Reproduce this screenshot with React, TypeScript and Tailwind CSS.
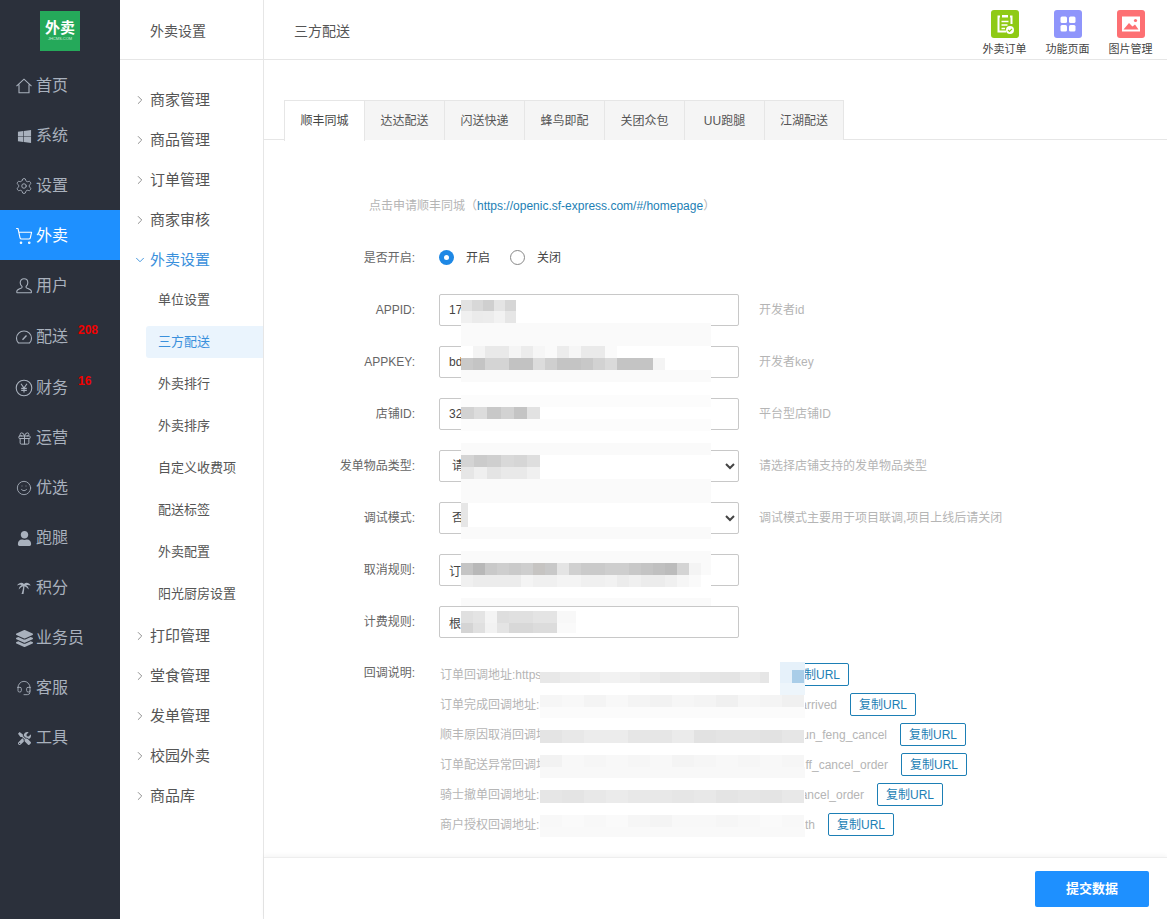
import { Settings, ShoppingCart, Gift, Smile, Headset, ChevronRight, ChevronDown } from "lucide-react";
import { FaWindows, FaUser, FaLayerGroup, FaTools } from "react-icons/fa";

const HomeIcon = () => (
  <svg width="18" height="18" viewBox="0 0 18 18" fill="none" stroke="currentColor" strokeWidth="1.1">
    <path d="M1.500 9.200 9 2.200l7.500 7M4 7.500v8.300h10V7.500" />
  </svg>
);

const UserIcon = () => (
  <svg width="18" height="18" viewBox="0 0 18 18" fill="none" stroke="currentColor" strokeWidth="1.1">
    <path d="M9 1.800c2.300 0 3.800 1.700 3.800 3.900 0 1.500-.7 2.900-1.700 3.700v1c0 .8 3.700 1.500 4.900 3 .5.600.5 2.400.3 2.400H2c-.3 0-.3-1.800.2-2.400 1.200-1.500 4.800-2.200 4.800-3v-1c-1.100-.8-1.800-2.200-1.800-3.700 0-2.200 1.500-3.900 3.800-3.900Z" />
  </svg>
);

const GaugeIcon = () => (
  <svg width="18" height="18" viewBox="0 0 18 18" fill="none" stroke="currentColor" strokeWidth="1.1">
    <path d="M3.500 15h11c1.300-1.300 2-3 2-4.800C16.500 6 13.200 3 9 3S1.500 6 1.500 10.200c0 1.800.7 3.500 2 4.800Z" />
    <path d="m7.500 11.800 4-4.300" strokeWidth="1.400" />
  </svg>
);

const YenIcon = () => (
  <svg width="18" height="18" viewBox="0 0 18 18" fill="none" stroke="currentColor" strokeWidth="1.1">
    <circle cx="9" cy="9" r="7.800" />
    <path d="M6 4.800 9 9l3-4.200M9 9v4.600M6.200 9.400h5.600M6.200 11.400h5.600" />
  </svg>
);

const PalmIcon = () => (
  <svg width="18" height="18" viewBox="0 0 18 18" fill="currentColor">
    <path d="M9 5C7 3 4 3.500 2 6.500c2-.8 3.500-.8 4.500-.3C4.800 7 3.800 8.500 3.800 10.500 5 9 6.500 7.800 8.200 7.200 8 9.500 7.500 12 6.500 15h2C9 12.500 9.300 9.800 9.500 7.300c1.500.6 3 1.800 4.200 3.200 0-2-1-3.500-2.600-4.300 1.200-.4 2.800-.3 4.600.4C14 3.500 11 3 9 5Z" />
  </svg>
);

const OrderIcon = () => (
  <svg width="20" height="22" viewBox="0 0 20 22" fill="none">
    <path d="M7 2h6v2.500H7z" fill="#fff" />
    <path d="M5 3.500H3.500v15H11" stroke="#fff" strokeWidth="2" />
    <path d="M15 3.500h1.500V11" stroke="#fff" strokeWidth="2" />
    <path d="M6.500 8.500h7M6.500 12h6M6.500 15.500h3.500" stroke="#fff" strokeWidth="1.600" />
    <circle cx="15" cy="17" r="4" fill="#fff" />
    <path d="m13 17 1.500 1.500 2.500-2.700" stroke="#8fca15" strokeWidth="1.200" />
  </svg>
);

const GridIcon = () => (
  <svg width="16" height="16" viewBox="0 0 16 16" fill="#fff">
    <rect x="0.500" y="0.500" width="6.500" height="6.500" rx="1.500" />
    <rect x="9" y="0.500" width="6.500" height="6.500" rx="1.500" />
    <rect x="0.500" y="9" width="6.500" height="6.500" rx="1.500" />
    <rect x="9" y="9" width="6.500" height="6.500" rx="1.500" />
  </svg>
);

const PictureIcon = () => (
  <svg width="20" height="18" viewBox="0 0 20 18">
    <rect x="1" y="1.500" width="18" height="15" fill="#fff" />
    <path d="M2.500 14.500 8 8l3.500 3.500 2.500-2 3.500 5z" fill="#fd7073" />
    <circle cx="14.500" cy="5.500" r="1.600" fill="#fd7073" />
  </svg>
);

const sideNav = [
  { label: "首页", h: "h-[50px]", icon: <HomeIcon /> },
  { label: "系统", h: "h-[50px]", icon: <FaWindows size={15} className="mx-px" /> },
  { label: "设置", h: "h-[50px]", icon: <Settings size={18} strokeWidth={1.2} /> },
  { label: "外卖", h: "h-[50px]", icon: <ShoppingCart size={18} strokeWidth={1.5} />, active: true },
  { label: "用户", h: "h-[50px]", icon: <UserIcon /> },
  { label: "配送", h: "h-[51px]", icon: <GaugeIcon />, badge: "208" },
  { label: "财务", h: "h-[51px]", icon: <YenIcon />, badge: "16" },
  { label: "运营", h: "h-[50px]", icon: <Gift size={15} strokeWidth={1.6} className="mx-px" /> },
  { label: "优选", h: "h-[50px]", icon: <Smile size={16} strokeWidth={1.3} className="mx-px" /> },
  { label: "跑腿", h: "h-[50px]", icon: <FaUser size={15} className="mx-px" /> },
  { label: "积分", h: "h-[50px]", icon: <PalmIcon /> },
  { label: "业务员", h: "h-[50px]", icon: <FaLayerGroup size={17} /> },
  { label: "客服", h: "h-[50px]", icon: <Headset size={16} strokeWidth={1.3} className="mx-px" /> },
  { label: "工具", h: "h-[50px]", icon: <FaTools size={13} className="mx-0.5" /> },
];

const subBefore = ["商家管理", "商品管理", "订单管理", "商家审核"];
const subChildren = ["单位设置", "三方配送", "外卖排行", "外卖排序", "自定义收费项", "配送标签", "外卖配置", "阳光厨房设置"];
const subAfter = ["打印管理", "堂食管理", "发单管理", "校园外卖", "商品库"];
const tabs = ["顺丰同城", "达达配送", "闪送快递", "蜂鸟即配", "关团众包", "UU跑腿", "江湖配送"];

const callbacks = [
  { text: "订单回调地址:https", tail: "", width: "w-[330px]" },
  { text: "订单完成回调地址:", tail: "arrived", width: "w-[397px]" },
  { text: "顺丰原因取消回调地", tail: "un_feng_cancel", width: "w-[447px]" },
  { text: "订单配送异常回调地", tail: "ff_cancel_order", width: "w-[448px]" },
  { text: "骑士撤单回调地址:", tail: "ancel_order", width: "w-[424px]" },
  { text: "商户授权回调地址:", tail: "th", width: "w-[375px]" },
];

type MosaicRow = { h: number; bg?: string; cells?: string; cw?: number };

// blurred-out areas of the screenshot, one strip per row
function Mosaic({ x, y, w, rows, cellW = 12 }: { x: number; y: number; w: number; rows: MosaicRow[]; cellW?: number }) {
  return (
    <div className="absolute flex flex-col overflow-hidden" style={{ left: x, top: y, width: w }}>
      {rows.map((row, i) => (
        <div key={i} className="flex shrink-0" style={{ height: row.h, backgroundColor: row.bg ?? "#ffffff" }}>
          {row.cells?.split(" ").map((c, j) => (
            <div key={j} className="h-full shrink-0" style={{ width: row.cw ?? cellW, backgroundColor: "#" + c }} />
          ))}
        </div>
      ))}
    </div>
  );
}

function Field({ label, value, hint }: { label: string; value: string; hint?: string }) {
  return (
    <div className="flex items-center h-8 mb-5">
      <label className="w-[155px] pr-1 text-right text-xs text-[#666]">{label}:</label>
      <input
        readOnly
        defaultValue={value}
        className="ml-5 w-[300px] h-8 px-[9px] text-xs text-[#444] border border-[#c8c8c8] rounded-[2px] bg-white"
      />
      {hint && <span className="ml-5 text-xs text-[#b5b5b5]">{hint}</span>}
    </div>
  );
}

function SelectField({ label, value, hint }: { label: string; value: string; hint: string }) {
  return (
    <div className="flex items-center h-8 mb-5">
      <label className="w-[155px] pr-1 text-right text-xs text-[#666]">{label}:</label>
      <select
        defaultValue={value}
        className="ml-5 w-[300px] h-8 px-2 text-xs text-[#444] border border-[#c8c8c8] rounded-[2px] bg-white"
      >
        <option>{value}</option>
      </select>
      <span className="ml-5 text-xs text-[#b5b5b5]">{hint}</span>
    </div>
  );
}

function TopShortcut({ label, color, children }: { label: string; color: string; children: React.ReactNode }) {
  return (
    <div className="w-[63px] flex flex-col items-center">
      <div className={`w-7 h-7 rounded-[3px] flex items-center justify-center ${color}`}>{children}</div>
      <span className="mt-[3px] text-[11px] leading-4 text-[#444]">{label}</span>
    </div>
  );
}

function SubParent({ label }: { label: string }) {
  return (
    <div className="h-10 flex items-center text-[15px] text-[#555]">
      <ChevronRight size={14} strokeWidth={1.6} className="ml-[13px] mr-[3px] text-[#888]" />
      {label}
    </div>
  );
}

export default function App() {
  return (
    <div
      className="relative flex w-full h-screen overflow-hidden bg-white"
      style={{ fontFamily: '"Liberation Sans", "Noto Sans CJK SC", sans-serif' }}
    >
      {/* main dark sidebar */}
      <aside className="w-[120px] shrink-0 bg-[#2b303b] text-[#a9b1bd]">
        <div className="h-[60px] flex justify-center pt-[11px]">
          <div className="w-10 h-10 bg-[#25a95a] flex flex-col items-center justify-center text-white">
            <span className="text-[15px] font-bold leading-4">外卖</span>
            <span className="text-[4px] leading-[6px] text-[#cfeedd]">JHCMS.COM</span>
          </div>
        </div>
        {sideNav.map((item) => (
          <div
            key={item.label}
            className={`relative ${item.h} pt-[2px] flex items-center pl-[15px] gap-[3px] text-base ${item.active ? "bg-[#1e90ff] text-white" : ""}`}
          >
            <span className="w-[18px] flex justify-center">{item.icon}</span>
            {item.label}
            {item.badge && (
              <span className="absolute left-[78px] top-[14px] text-xs font-bold leading-none text-[#f00000]">{item.badge}</span>
            )}
          </div>
        ))}
      </aside>

      {/* second level menu */}
      <nav className="w-[144px] shrink-0 border-r border-[#e6e6e6]">
        <div className="h-[60px] pt-[2px] pl-[30px] flex items-center text-sm text-[#555] border-b border-[#e6e6e6]">外卖设置</div>
        <div className="pt-5">
          {subBefore.map((s) => (
            <SubParent key={s} label={s} />
          ))}
          <div className="h-10 flex items-center text-[15px] text-[#3a90dc]">
            <ChevronDown size={14} strokeWidth={1.6} className="ml-[13px] mr-[3px]" />
            外卖设置
          </div>
          <div className="-mt-px pb-px">
            {subChildren.map((s) => (
              <div key={s} className="h-[42px] py-[5px] pl-[26px]">
                <div className={`h-8 pl-3 flex items-center text-[13px] rounded-l-[3px] ${s === "三方配送" ? "bg-[#eaf4fd] text-[#3a90dc]" : "text-[#555]"}`}>
                  {s}
                </div>
              </div>
            ))}
          </div>
          {subAfter.map((s) => (
            <SubParent key={s} label={s} />
          ))}
        </div>
      </nav>

      {/* content */}
      <main className="flex-1 min-w-0 flex flex-col">
        <header className="h-[60px] shrink-0 flex justify-between pl-[30px] pr-[5px] border-b border-[#e6e6e6]">
          <span className="self-center pt-[2px] text-sm text-[#555]">三方配送</span>
          <div className="flex pt-[10px]">
            <TopShortcut label="外卖订单" color="bg-[#8fca15]">
              <OrderIcon />
            </TopShortcut>
            <TopShortcut label="功能页面" color="bg-[#8f95fb]">
              <GridIcon />
            </TopShortcut>
            <TopShortcut label="图片管理" color="bg-[#fd7073]">
              <PictureIcon />
            </TopShortcut>
          </div>
        </header>

        <div className="flex-1 min-h-0 pt-10">
          <div className="flex h-10 pl-5 border-b border-[#e6e6e6]">
            {tabs.map((t, i) => (
              <div
                key={t}
                className={`h-10 flex items-center justify-center text-xs border-t border-r border-[#e6e6e6] ${i === 0 ? "w-[81px] bg-white text-[#444] border-l -mb-px h-[41px]" : i === 6 ? "w-[79px] bg-[#f5f5f5] text-[#555]" : "w-20 bg-[#f5f5f5] text-[#555]"}`}
              >
                {t}
              </div>
            ))}
          </div>

          <p className="mt-[56px] ml-[105px] h-5 text-xs leading-5 text-[#b5b5b5]">
            点击申请顺丰同城（<span className="text-[#1d7fb5]">https://openic.sf-express.com/#/homepage</span>）
          </p>

          <div className="mt-[25px] pt-px flex items-center h-8 mb-[21px]">
            <label className="w-[155px] pr-1 text-right text-xs text-[#666]">是否开启:</label>
            <span className="ml-5 w-[15px] h-[15px] rounded-full bg-[#1e88e5] flex items-center justify-center">
              <span className="w-[5px] h-[5px] rounded-full bg-white" />
            </span>
            <span className="ml-3 text-xs text-[#444]">开启</span>
            <span className="ml-5 w-[15px] h-[15px] rounded-full border border-[#888] bg-white" />
            <span className="ml-[12px] text-xs text-[#444]">关闭</span>
          </div>

          <Field label="APPID" value="17" hint="开发者id" />
          <Field label="APPKEY" value="bd" hint="开发者key" />
          <Field label="店铺ID" value="32" hint="平台型店铺ID" />
          <SelectField label="发单物品类型" value="请选择" hint="请选择店铺支持的发单物品类型" />
          <SelectField label="调试模式" value="否" hint="调试模式主要用于项目联调,项目上线后请关闭" />
          <Field label="取消规则" value="订" />
          <Field label="计费规则" value="根" />

          <div className="flex mt-[25px]">
            <label className="w-[155px] pr-1 text-right text-xs leading-5 text-[#666]">回调说明:</label>
            <div className="ml-[21px] flex flex-col gap-[7px]">
              {callbacks.map((c) => (
                <div key={c.text} className="flex items-center h-[23px]">
                  <span className={`flex justify-between text-xs text-[#b5b5b5] ${c.width}`}>
                    <span>{c.text}</span>
                    <span>{c.tail}</span>
                  </span>
                  <button className="ml-[13px] w-[66px] h-[23px] text-xs text-[#1d7fb5] border border-[#1d7fb5] rounded-[2px] bg-white">
                    复制URL
                  </button>
                </div>
              ))}
            </div>
          </div>
        </div>

        <footer className="h-[62px] shrink-0 flex items-center justify-end pr-[18px] bg-white border-t border-[#eeeeee] shadow-[0_-2px_4px_rgba(0,0,0,0.04)]">
          <button className="w-[114px] h-9 text-[13px] font-bold text-white bg-[#1e90ff] rounded-[2px]">提交数据</button>
        </footer>
      </main>

      {/* blurred areas from the source picture */}
      <Mosaic
        x={461}
        y={300}
        w={55}
        cellW={11}
        rows={[
          { h: 11, cells: "e2e2e2 d8d8d8 cfcfcf e4e4e4 d6d6d6" },
          { h: 12, cells: "f0f0f0 ebebeb ececec f2f2f2 e6e6e6" },
        ]}
      />
      <Mosaic
        x={461}
        y={323}
        w={250}
        rows={[
          { h: 23, bg: "#fafafa" },
          { h: 12, cells: "ffffff f4f4f4 e9e9e9 e9e9e9 f5f5f5 ececec f6f6f6 fafafa ececec f6f6f6 eaeaea eaeaea fafafa" },
          { h: 12, cells: "c9c9c9 c4c4c4 d4d4d4 d4d4d4 c2c2c2 c2c2c2 dcdcdc cfcfcf c4c4c4 c4c4c4 c8c8c8 d2d2d2 dadada c4c4c4 c4c4c4 c4c4c4 f4f4f4" },
          { h: 12, bg: "#fafafa" },
          { h: 13 },
          { h: 12, bg: "#fcfcfc" },
          { h: 12, cw: 13.2, cells: "d2d2d2 dcdcdc c8c8c8 d2d2d2 c4c4c4 e2e2e2" },
          { h: 12, bg: "#fcfcfc" },
          { h: 12 },
          { h: 12, bg: "#fafafa" },
          { h: 12, cw: 13.2, cells: "d4d4d4 cbcbcb cfcfcf d9d9d9 d6d6d6 dedede" },
          { h: 12, cw: 13.2, cells: "e6e6e6 efefef e4e4e4 e9e9e9 e9e9e9 f0f0f0" },
          { h: 24, bg: "#fafafa" },
          { h: 24, cw: 7, cells: "e6e6e6" },
          { h: 12, bg: "#fafafa" },
          { h: 12 },
          { h: 12, bg: "#fafafa" },
          { h: 12, cells: "c4c4c4 b8b8b8 c9c9c9 cecece cacaca cecece c6c4c2 c8c8c8 e4e4e4 d0d0d0 cacaca cacaca cecece cecece c8c8c8 c4c4c4 c0c0c0 bcbcbc d4d4d4 f4f4f4 fafafa" },
          { h: 12, cells: "f0f0f0 ececec ececec ececec ececec f4f4f4 f0f0f0 f0f0f0 f4f4f4 f4f4f4 f0f0f0 f0f0f0 f2f2f2 ececec f0f0f0 ececec ececec f0f0f0 f6f6f6 fafafa" },
          { h: 11 },
          { h: 8, bg: "#fafafa" },
        ]}
      />
      <Mosaic
        x={461}
        y={611}
        w={115}
        rows={[
          { h: 12, cells: "e0e0e0 e4e4e4 f4f4f4 dedede e0e0e0 e0e0e0 e4e4e4 e4e4e4 f8f8f8 f8f8f8" },
          { h: 10, cells: "d4d4d4 e0e0e0 f2f2f2 e4e4e4 d8d8d8 d8d8d8 dcdcdc dcdcdc fafafa fafafa" },
        ]}
      />
      <Mosaic x={540} y={669} w={229} cellW={20} rows={[{ h: 3 }, { h: 11, cells: "e8e8e8 ececec eeeeee f2f2f2 f0f0f0 ececec e8e8e8 eaeaea e6e6e6 e4e4e4 ebebeb e6e6e6" }]} />
      <Mosaic x={780} y={662} w={25} rows={[{ h: 8, bg: "#e6f1fa" }, { h: 13, bg: "#e6f1fa", cells: "e6f1fa a9cde8" }, { h: 12, bg: "#edf5fb" }]} />
      <Mosaic x={540} y={695} w={265} cellW={22} rows={[{ h: 12, cells: "f6f6f6 f8f8f8 f4f4f4 f8f8f8 f4f4f4 f2f2f2 f6f6f6 f4f4f4 f0f0f0 f6f6f6 f4f4f4 f0f0f0" }, { h: 11, bg: "#fbfbfb" }]} />
      <Mosaic x={540} y={728} w={265} cellW={22} rows={[{ h: 2 }, { h: 13, cells: "e4e4e4 e8e8e8 ececec ececec e6e6e6 e6e6e6 ebebeb e2e2e2 e4e4e4 e4e4e4 e2e2e2 e6e6e6" }]} />
      <Mosaic x={540} y={755} w={265} cellW={22} rows={[{ h: 12, cells: "f2f2f2 f8f8f8 f6f6f6 f8f8f8 f6f6f6 f8f8f8 f4f4f4 f6f6f6 f8f8f8 f6f6f6 f8f8f8 f6f6f6" }, { h: 11, bg: "#f8f8f8" }]} />
      <Mosaic x={540} y={790} w={265} cellW={22} rows={[{ h: 13, cells: "e6e6e6 e4e4e4 e8e8e8 ebebeb e8e8e8 e8e8e8 e6e6e6 e8e8e8 e4e4e4 e6e6e6 e4e4e4 e8e8e8" }]} />
      <Mosaic x={540} y={815} w={265} cellW={22} rows={[{ h: 12, cells: "f8f8f8 fafafa f8f8f8 fafafa f6f6f6 f4f4f4 f8f8f8 f8f8f8 f6f6f6 f8f8f8 fafafa f8f8f8" }, { h: 10, bg: "#f9f9f9" }]} />
    </div>
  );
}
